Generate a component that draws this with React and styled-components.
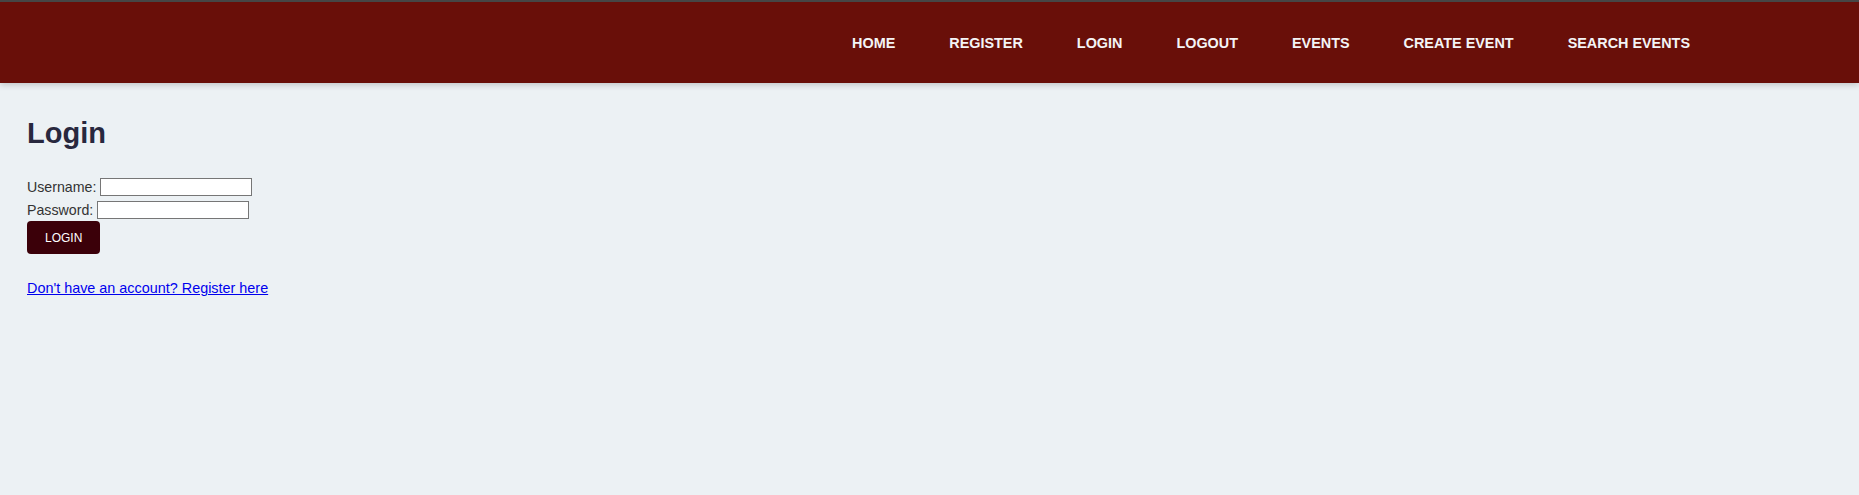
import React from 'react';
import styled, { createGlobalStyle } from 'styled-components';

const GlobalStyle = createGlobalStyle`
  html, body {
    margin: 0;
    padding: 0;
    background-color: #ecf1f4;
    font-family: "Liberation Sans", Arial, sans-serif;
  }
`;

const Header = styled.header`
  height: 81px;
  border-top: 2px solid #464646;
  background-color: #690f09;
  box-shadow: 0 2px 6px rgba(0, 0, 0, 0.18);
  display: flex;
  align-items: center;
  justify-content: flex-end;
  padding-right: 142px;
`;

const Nav = styled.nav`
  display: flex;
  align-items: center;
`;

const NavLink = styled.a`
  padding: 10px 27px;
  color: #f4f4f6;
  font-size: 14.4px;
  font-weight: bold;
  text-transform: uppercase;
  text-decoration: none;
  line-height: 16px;
  white-space: nowrap;
`;

const Main = styled.main`
  padding: 34px 27px 0;
`;

const Title = styled.h2`
  margin: 0;
  font-size: 29px;
  line-height: 32px;
  font-weight: bold;
  color: #28283e;
`;

const Form = styled.form`
  margin-top: 29px;
  display: flex;
  flex-direction: column;
  align-items: flex-start;
`;

const Row = styled.div`
  display: flex;
  align-items: center;
  gap: 4px;
  height: 18px;
  margin-bottom: ${(p) => p.$space || 4}px;
`;

const Label = styled.label`
  font-size: 14.2px;
  color: #333;
`;

const Input = styled.input`
  box-sizing: border-box;
  width: 152px;
  height: 18px;
  margin: 0;
  padding: 0 2px;
  border: 1px solid #767676;
  background: #fff;
  font-size: 13px;
`;

const Button = styled.button`
  box-sizing: border-box;
  height: 33px;
  padding: 0 18px;
  border: none;
  border-radius: 4px;
  background-color: #3b0009;
  color: #fff;
  font-family: "Liberation Sans", Arial, sans-serif;
  font-size: 12px;
  cursor: pointer;
`;

const RegisterLink = styled.a`
  display: block;
  margin-top: 26px;
  font-size: 14.4px;
  line-height: 16px;
  color: #0000ee;
  text-decoration: underline;
`;

const links = ['Home', 'Register', 'Login', 'Logout', 'Events', 'Create Event', 'Search Events'];

const App = () => {
  return (
    <>
      <GlobalStyle />
      <Header>
        <Nav>
          {links.map((l) => (
            <NavLink key={l} href="#">{l}</NavLink>
          ))}
        </Nav>
      </Header>
      <Main>
        <Title>Login</Title>
        <Form onSubmit={(e) => e.preventDefault()}>
          <Row $space={5}>
            <Label htmlFor="username">Username:</Label>
            <Input id="username" type="text" />
          </Row>
          <Row $space={2}>
            <Label htmlFor="password">Password:</Label>
            <Input id="password" type="password" />
          </Row>
          <Button type="submit">LOGIN</Button>
        </Form>
        <RegisterLink href="#">Don't have an account? Register here</RegisterLink>
      </Main>
    </>
  );
};

export default App;
